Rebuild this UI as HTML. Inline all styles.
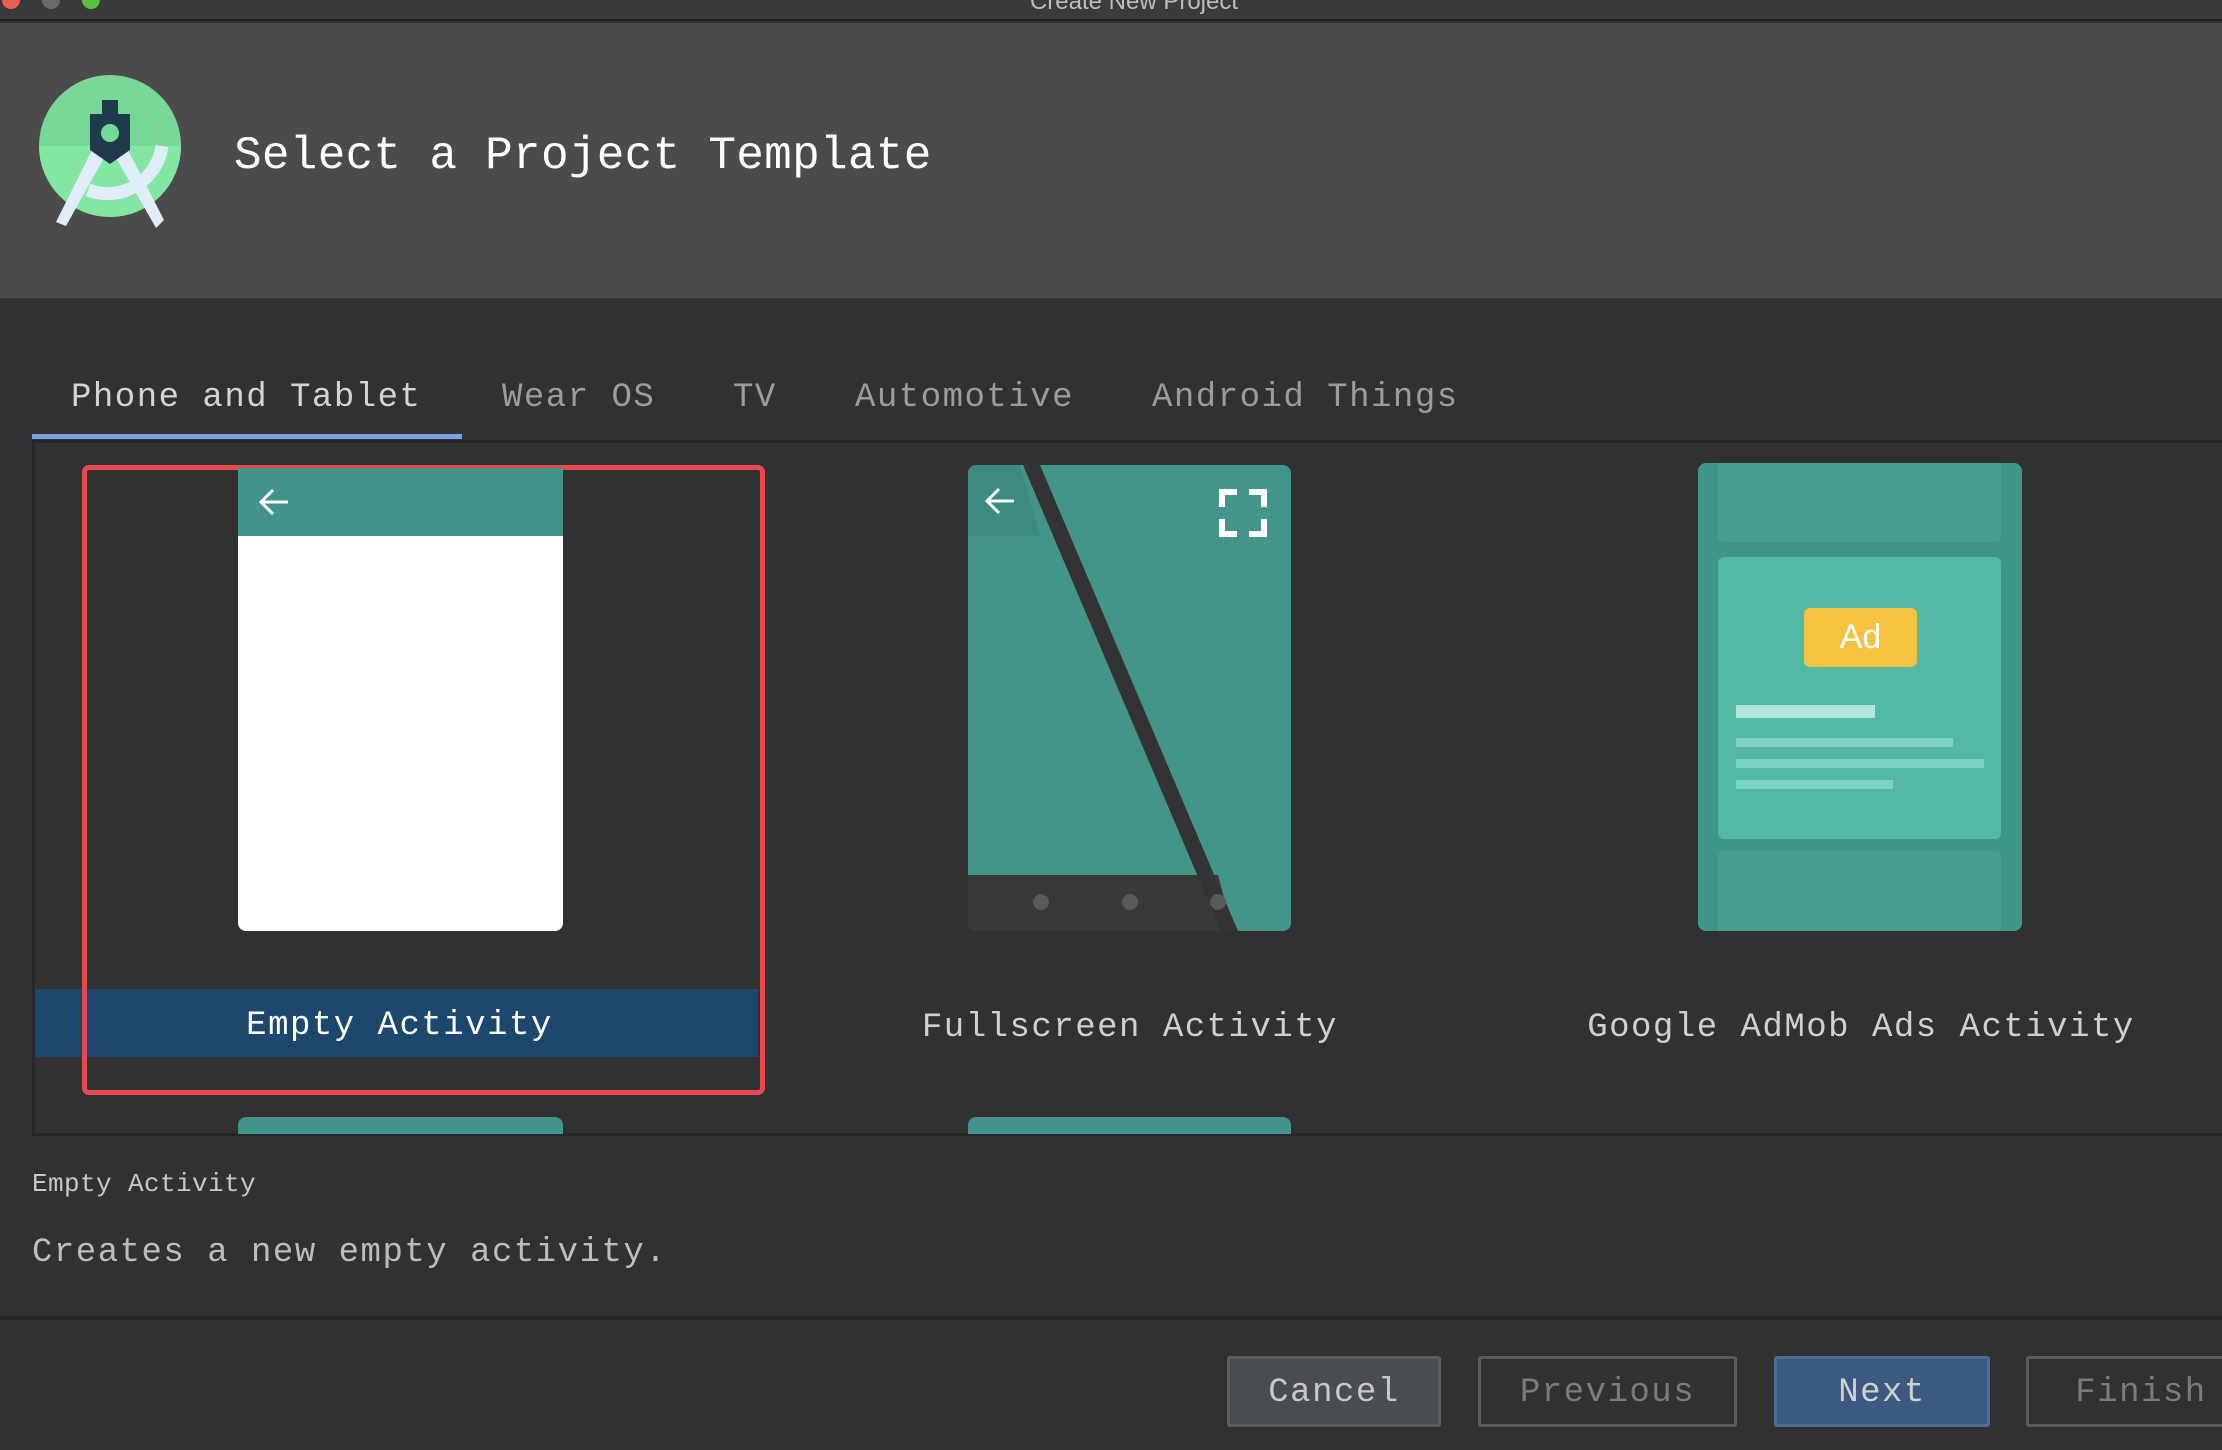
<!DOCTYPE html>
<html><head><meta charset="utf-8"><style>
*{margin:0;padding:0;box-sizing:border-box}
body{width:2222px;height:1450px;background:#313131;position:relative;overflow:hidden;font-family:"Liberation Mono","DejaVu Sans Mono",monospace}
.a{position:absolute}
.t{position:absolute;white-space:nowrap;font-size:34px;letter-spacing:1.5px;line-height:40px;height:40px}
.btn{position:absolute;top:1356px;height:71px;border:3px solid #5c5c5c;border-radius:3px;font-size:34px;letter-spacing:1.5px;line-height:69px;text-align:center}
</style></head><body>
<div class="a" style="left:0;top:0;width:2222px;height:21px;background:#3b3b3b;border-bottom:2px solid #1e1e1e"></div>
<div class="a" style="left:2px;top:-9px;width:18px;height:18px;border-radius:50%;background:#ed5f56"></div>
<div class="a" style="left:42px;top:-9px;width:18px;height:18px;border-radius:50%;background:#6a6a6a"></div>
<div class="a" style="left:82px;top:-9px;width:18px;height:18px;border-radius:50%;background:#5fc140"></div>
<div class="a" style="left:0;top:-12px;width:2268px;text-align:center;font-family:'Liberation Sans',sans-serif;font-size:24px;color:#bdbdbd">Create New Project</div>
<div class="a" style="left:0;top:23px;width:2222px;height:275px;background:#4b4b4b"></div>
<svg class="a" style="left:0;top:0" width="240" height="260" viewBox="0 0 240 260">
<defs><clipPath id="c"><circle cx="110" cy="146" r="71"/></clipPath></defs>
<circle cx="110" cy="146" r="71" fill="#78d897"/>
<rect x="30" y="146" width="160" height="80" fill="#83e6a2" clip-path="url(#c)"/>
<path d="M88 190 A55 55 0 0 0 162 146" fill="none" stroke="#e0edf8" stroke-width="13"/>
<path d="M92 150 L104 158 L66 226 L56 222 Z" fill="#e0edf8"/>
<path d="M128 150 L116 158 L156 228 L164 220 Z" fill="#e0edf8"/>
<path d="M102 100 H118 V114 H130 V150 L110 164 L90 150 V114 H102 Z" fill="#1f3a4b"/>
<circle cx="110" cy="133" r="9" fill="#78d897"/>
</svg>
<div class="t" style="left:234px;top:131px;height:50px;line-height:50px;font-size:46px;letter-spacing:0.3px;color:#ffffff">Select a Project Template</div>
<div class="t" style="left:71px;top:378px;color:#d4d4d4">Phone and Tablet</div>
<div class="t" style="left:502px;top:378px;color:#9c9c9c">Wear OS</div>
<div class="t" style="left:733px;top:378px;color:#9c9c9c">TV</div>
<div class="t" style="left:855px;top:378px;color:#9c9c9c">Automotive</div>
<div class="t" style="left:1152px;top:378px;color:#9c9c9c">Android Things</div>
<div class="a" style="left:32px;top:434px;width:430px;height:5px;background:#77a3ea"></div>
<div class="a" style="left:32px;top:440px;width:2200px;height:3px;background:#272727"></div>
<div class="a" style="left:32px;top:443px;width:3px;height:692px;background:#272727"></div>
<div class="a" style="left:32px;top:1133px;width:2200px;height:3px;background:#272727"></div>
<div class="a" style="left:35px;top:989px;width:723px;height:68px;background:#1d476c"></div>
<div class="t" style="left:38px;top:1006px;width:723px;text-align:center;color:#ffffff">Empty Activity</div>
<div class="a" style="left:82px;top:465px;width:683px;height:630px;border:5px solid #e5484d;border-radius:7px"></div>
<div class="a" style="left:238px;top:468px;width:325px;height:463px;background:#fff;border-radius:0 0 8px 8px;overflow:hidden">
<div style="height:68px;background:#42938a"></div>
<svg class="a" style="left:20px;top:18px" width="34" height="32" viewBox="0 0 34 32"><path d="M30 16 H4 M15 4 L3 16 L15 28" fill="none" stroke="#fff" stroke-width="3"/></svg>
</div>
<div class="a" style="left:238px;top:1117px;width:325px;height:17px;background:#42938a;border-radius:8px 8px 0 0"></div>
<svg class="a" style="left:968px;top:465px" width="323" height="466" viewBox="0 0 323 466">
<defs><clipPath id="r"><rect width="323" height="466" rx="8"/></clipPath></defs>
<g clip-path="url(#r)">
<rect width="323" height="466" fill="#43958a"/>
<path d="M0 0 H52 L72 71 H0 Z" fill="#3c8a80"/>
<path d="M0 410 H250 L265 466 H0 Z" fill="#393939"/>
<path d="M55 0 H72 L270 466 H253 Z" fill="#333333"/>
<circle cx="73" cy="437" r="8" fill="#5a5a5a"/>
<circle cx="162" cy="437" r="8" fill="#5a5a5a"/>
<circle cx="250" cy="437" r="8" fill="#5a5a5a"/>
<path d="M46 36 H20 M31 24 L19 36 L31 48" fill="none" stroke="#fff" stroke-width="3"/>
<path d="M254 42 V27 H269 M281 27 H296 V42 M296 54 V69 H281 M269 69 H254 V54" fill="none" stroke="#fff" stroke-width="6"/>
</g></svg>
<div class="a" style="left:968px;top:1117px;width:323px;height:17px;background:#42938a;border-radius:8px 8px 0 0"></div>
<div class="t" style="left:868px;top:1008px;width:524px;text-align:center;color:#d0d0d0">Fullscreen Activity</div>
<div class="a" style="left:1698px;top:463px;width:324px;height:468px;background:#3f9688;border-radius:8px;overflow:hidden">
<div class="a" style="left:20px;top:0;width:283px;height:79px;background:#469f8f;border-radius:0 0 6px 6px"></div>
<div class="a" style="left:20px;top:94px;width:283px;height:282px;background:#53b9a4;border-radius:6px"></div>
<div class="a" style="left:20px;top:388px;width:283px;height:80px;background:#469f8f;border-radius:6px 6px 0 0"></div>
<div class="a" style="left:106px;top:145px;width:113px;height:59px;background:#f5c242;border-radius:6px;color:#fff;font-family:'Liberation Sans',sans-serif;font-size:34px;line-height:59px;text-align:center">Ad</div>
<div class="a" style="left:38px;top:242px;width:139px;height:13px;background:#b3e5dc"></div>
<div class="a" style="left:38px;top:275px;width:217px;height:9px;background:#7ed2c3"></div>
<div class="a" style="left:38px;top:296px;width:248px;height:9px;background:#7ed2c3"></div>
<div class="a" style="left:38px;top:317px;width:157px;height:9px;background:#7ed2c3"></div>
</div>
<div class="t" style="left:1561px;top:1008px;width:600px;text-align:center;color:#d0d0d0">Google AdMob Ads Activity</div>
<div class="t" style="left:32px;top:1169px;height:30px;line-height:30px;font-size:26px;letter-spacing:0.4px;color:#c8c8c8">Empty Activity</div>
<div class="t" style="left:32px;top:1233px;color:#bdbdbd">Creates a new empty activity.</div>
<div class="a" style="left:0;top:1316px;width:2222px;height:4px;background:#232323"></div>
<div class="btn" style="left:1227px;width:214px;background:#4a4d50;color:#c8c8c8">Cancel</div>
<div class="btn" style="left:1478px;width:259px;background:#313131;color:#7c7c7c">Previous</div>
<div class="btn" style="left:1774px;width:216px;background:#3c5a80;border-color:#4c6f96;color:#d0d0d0">Next</div>
<div class="btn" style="left:2026px;width:230px;background:#313131;color:#7c7c7c">Finish</div>
</body></html>
